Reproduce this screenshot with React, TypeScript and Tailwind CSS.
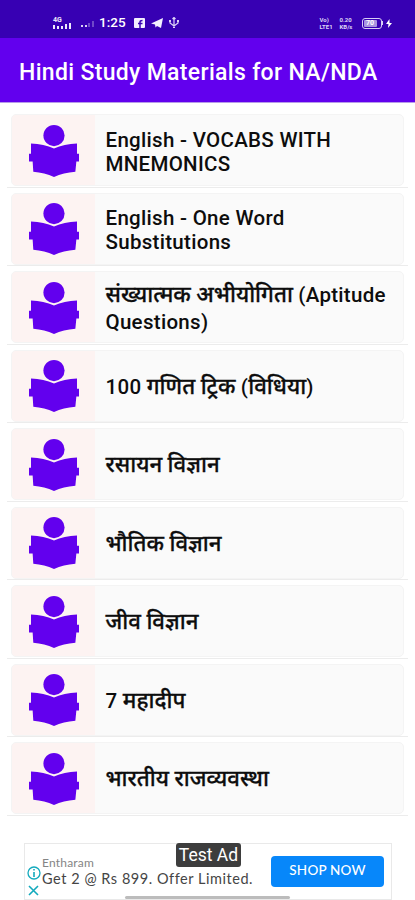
import React from 'react';

type Topic = {
  lines: string[];
  leading: string;
};

const topics: Topic[] = [
  { lines: ['English - VOCABS WITH', 'MNEMONICS'], leading: 'leading-[24px]' },
  { lines: ['English - One Word', 'Substitutions'], leading: 'leading-[24px]' },
  { lines: ['संख्यात्मक अभीयोगिता (Aptitude', 'Questions)'], leading: 'leading-[27px]' },
  { lines: ['100 गणित ट्रिक (विधिया)'], leading: 'leading-[27px]' },
  { lines: ['रसायन विज्ञान'], leading: 'leading-[27px]' },
  { lines: ['भौतिक विज्ञान'], leading: 'leading-[27px]' },
  { lines: ['जीव विज्ञान'], leading: 'leading-[27px]' },
  { lines: ['7 महादीप'], leading: 'leading-[27px]' },
  { lines: ['भारतीय राजव्यवस्था'], leading: 'leading-[27px]' },
];

// Devanagari runs are set a little larger and heavier than the Latin ones
const TopicLine: React.FC<{ text: string }> = ({ text }) => (
  <span className="block">
    {text.split(/([\u0900-\u097F]+(?: [\u0900-\u097F]+)*)/).map((part, i) =>
      i % 2 === 1 ? (
        <span key={i} className="text-[22.200px] leading-none tracking-normal [-webkit-text-stroke:0.300px_#0d0d0d]">
          {part}
        </span>
      ) : (
        part
      )
    )}
  </span>
);

const ReaderIcon: React.FC = () => (
  <svg viewBox="0 0 151 157" className="h-[52px] w-[50px]" fill="#6200ee">
    <circle cx="75.500" cy="32" r="32" />
    <path d="M6 56Q45 58 75.500 71Q106 58 145 56V87H151V110H143L140 141Q104 144 75.500 157Q47 144 13 141L11 110H0V87H6Z" />
  </svg>
);

const SignalIcon: React.FC = () => (
  <div className="w-5">
    <div className="h-[6px] text-[7px] leading-[6px] font-bold text-[#eee9fb]">4G</div>
    <svg viewBox="0 0 20 7" className="h-[7px] w-5" fill="#eee9fb">
      <path d="M0 2h2v4H0zM4 3h2v3H4zM8 3h2v3H8zM12 1h2v5h-2zM16 0h2v6h-2z" />
    </svg>
  </div>
);

const StatusBar: React.FC = () => (
  <div className="flex h-[38px] items-center bg-[#3700b3] pt-[8px] pl-[53px] pr-[23px] text-white">
    <SignalIcon />
    <svg viewBox="0 0 14 12" className="ml-2 h-3 w-[14px]" fill="#d9cff3">
      <path d="M0 8h2v2H0zM4 8h2v2H4z" />
      <path d="M7 6h2v4H7zM11 4h2v6h-2z" opacity=".35" />
    </svg>
    <span className="ml-[4px] w-[27px] text-[13.500px] leading-none font-medium whitespace-nowrap">1:25</span>
    <svg viewBox="0 0 11 10" className="ml-[8px] h-[10px] w-[11px]">
      <rect width="11" height="10" rx="1" fill="#f3efff" />
      <path d="M6 10V4Q6 2.500 8.500 2.500M4 5.500h4.500" fill="none" stroke="#3700b3" strokeWidth="1.500" />
    </svg>
    <svg viewBox="0 0 12 10" className="ml-[6px] h-[10px] w-3" fill="#f3efff">
      <path d="M0 5.500L12 0L10 10L6 8L4.500 9.500L4 6.500Z" />
    </svg>
    <svg viewBox="0 0 10 12" className="ml-[6px] h-3 w-[10px]" fill="none" stroke="#ddd3f7" strokeWidth="1.200">
      <path d="M5 1v10M1 4v2l4 3l4-3V4M3.500 2L5 .500L6.500 2" />
      <path d="M0 3h2v2H0zM8 3h2v2H8zM4 10h2v1H4z" fill="#ddd3f7" stroke="none" />
    </svg>
    <div className="ml-auto flex items-center">
      <div className="w-[13px] text-[6px] leading-[7px] font-bold text-[#ddd5f5]">
        <div>Vo)</div>
        <div>LTE1</div>
      </div>
      <div className="ml-[7px] w-[14px] text-[6px] leading-[7px] font-bold text-[#ddd5f5]">
        <div>0.20</div>
        <div>KB/s</div>
      </div>
      <div className="ml-[8px] flex h-[11px] w-[20px] items-center rounded-[3px] border border-[#d8cef5] p-px">
        <div className="flex h-full w-[13px] items-center justify-center rounded-[1px] bg-[#a995e0] text-[7px] leading-none font-bold text-white">
          70
        </div>
      </div>
      <div className="h-1 w-[1.500px] bg-[#d8cef5]" />
      <svg viewBox="0 0 6 9" className="ml-[3px] h-[9px] w-[6px]" fill="#fff">
        <path d="M3.500 0L0 5h2.500L2 9L6 4H3.500Z" />
      </svg>
    </div>
  </div>
);

const TopicRow: React.FC<{ topic: Topic }> = ({ topic }) => (
  <li className="h-[78.500px] border-b-[1.500px] border-[#ececec] px-[4px] pt-[5px]">
    <div className="flex h-[72px] w-[393px] overflow-hidden rounded-[5px] border border-[#f4f4f4] bg-[#fafafa]">
      <div className="flex w-[83px] shrink-0 justify-center bg-[#fdf3f2] pt-[9.500px]">
        <ReaderIcon />
      </div>
      <div
        className={`flex flex-col justify-center pt-[3px] pl-[10.500px] text-[20.500px] font-medium tracking-[0.300px] whitespace-nowrap text-[#0d0d0d] ${topic.leading}`}
      >
        {topic.lines.map((line) => (
          <TopicLine key={line} text={line} />
        ))}
      </div>
    </div>
  </li>
);

const AdBanner: React.FC = () => (
  <div className="relative ml-[24px] flex h-[57px] w-[368px] border border-[#e9e9e9] bg-white font-['Lato','Noto_Sans',sans-serif]">
    <div className="flex w-[17px] flex-col items-center pt-[22px]">
      <svg viewBox="0 0 14 14" className="h-[14px] w-[14px]" fill="none" stroke="#13aabd" strokeWidth="1.300">
        <circle cx="7" cy="7" r="6" />
        <path d="M7 6v5M7 3v1.500" strokeWidth="1.600" />
      </svg>
      <svg viewBox="0 0 11 11" className="mt-[5px] h-[11px] w-[11px]" fill="none" stroke="#13aabd" strokeWidth="1.600">
        <path d="M1 1l9 9M10 1l-9 9" />
      </svg>
    </div>
    <div className="pt-[11px] whitespace-nowrap">
      <div className="text-[12px] leading-[15px] tracking-[0.200px] text-[#858585]">Entharam</div>
      <div className="text-[14.500px] leading-[17px] tracking-[0.540px] text-[#454545]">Get 2 @ Rs 899. Offer Limited.</div>
    </div>
    <button
      type="button"
      className="absolute top-[12px] right-[7px] h-[31px] w-[113px] rounded-[4px] bg-[#0787fa] pb-[2px] text-[13.500px] font-medium tracking-[0.200px] whitespace-nowrap text-white"
    >
      SHOP NOW
    </button>
    <div className="absolute -top-px left-[151px] h-[24px] w-[65px] rounded-[3px] bg-[#3d3d3d] text-center font-['Roboto',sans-serif] text-[17.500px] leading-[25px] whitespace-nowrap text-white">
      Test Ad
    </div>
    <div className="absolute bottom-0 left-[100px] h-[3px] w-[165px] rounded-full bg-[#bcbcbc]" />
  </div>
);

const App: React.FC = () => {
  return (
    <div className="h-[900px] w-[415px] overflow-hidden bg-white font-['Roboto','Noto_Sans_Devanagari','Noto_Sans',sans-serif]">
      <StatusBar />
      <header className="flex h-[65px] items-center border-b border-[#b69be9] bg-[#6200ee] pt-[6px] pl-[19px]">
        <h1 className="text-[23px] font-medium tracking-[0.320px] whitespace-nowrap text-white">
          Hindi Study Materials for NA/NDA
        </h1>
      </header>
      <ul className="mx-[7px] mt-[6px]">
        {topics.map((topic) => (
          <TopicRow key={topic.lines[0]} topic={topic} />
        ))}
      </ul>
      <div className="pt-[27px]">
        <AdBanner />
      </div>
    </div>
  );
};

export default App;
